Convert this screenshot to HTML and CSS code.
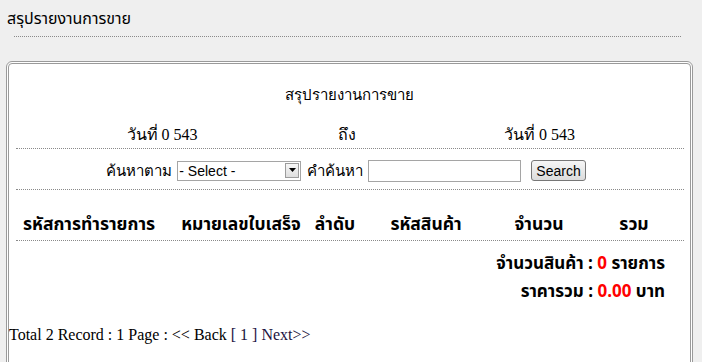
FILE: index.html
```html
<!DOCTYPE html>
<html lang="th">
<head>
  <meta charset="UTF-8">
  <title>สรุปรายงานการขาย</title>
  <link rel="stylesheet" href="styles.css">
</head>
<body>
  <div class="page-title">สรุปรายงานการขาย</div>
  <div class="title-rule"></div>

  <div class="panel">
    <div class="report-title">สรุปรายงานการขาย</div>

    <div class="date-row">
      <span>วันที่ 0 543</span>
      <span>ถึง</span>
      <span>วันที่ 0 543</span>
    </div>
    <div class="rule"></div>

    <form class="search-row" onsubmit="return false;">
      <label>ค้นหาตาม</label>
      <span class="select-wrap">
        <select class="search-select">
          <option>- Select -</option>
        </select>
        <span class="select-arrow">
          <svg width="7" height="4" viewBox="0 0 7 4"><path d="M0 0h7L3.5 4z" fill="#000"/></svg>
        </span>
      </span>
      <label>คำค้นหา</label>
      <input type="text" class="search-input">
      <button type="submit" class="search-btn">Search</button>
    </form>
    <div class="rule"></div>

    <div class="head-row">
      <div>รหัสการทำรายการ</div>
      <div>หมายเลขใบเสร็จ</div>
      <div>ลำดับ</div>
      <div>รหัสสินค้า</div>
      <div>จำนวน</div>
      <div>รวม</div>
    </div>
    <div class="rule"></div>

    <div class="summary">
      <div>จำนวนสินค้า : <span class="num">0</span> รายการ</div>
      <div>ราคารวม : <span class="num">0.00</span> บาท</div>
    </div>

    <div class="pager">
      Total 2 Record : 1 Page : &lt;&lt; Back <a href="#">[ 1 ]</a> <a href="#">Next&gt;&gt;</a>
    </div>
  </div>
</body>
</html>
```

FILE: styles.css
```css
body {
  margin: 0;
  padding: 8px 9px 0 6px;
  background: #efefef;
  font-family: "Liberation Serif", "Tahoma", serif;
  font-size: 16px;
  color: #000;
  overflow: hidden;
}

.page-title {
  font-family: "Tahoma", "Noto Sans Thai", "DejaVu Sans", sans-serif;
  font-size: 16px;
  line-height: 22px;
  padding-left: 1px;
}

.title-rule {
  border-top: 1px dotted #8a8a8a;
  margin: 6px 12px 0 8px;
}

.panel {
  margin-top: 24px;
  background: #fff;
  border: 3px double #9a9a9a;
  border-radius: 6px;
  min-height: 320px;
}

.report-title {
  text-align: center;
  font-size: 15px;
  padding-top: 21px;
  line-height: 20px;
}

.date-row {
  display: grid;
  grid-template-columns: 306px 64px 1fr;
  text-align: center;
  margin-top: 20px;
  line-height: 20px;
}

.date-row span:last-child {
  padding-left: 10px;
}

.rule {
  border-top: 1px dotted #8a8a8a;
  margin: 0 6px 0 7px;
}

.date-row + .rule {
  margin-top: 3px;
}

.search-row {
  display: flex;
  justify-content: center;
  align-items: center;
  gap: 5px;
  height: 40px;
  box-sizing: border-box;
  padding: 3px 7px 0 0;
  margin: 0;
}

.search-row label {
  font-size: 15px;
}

.select-wrap {
  position: relative;
  display: inline-block;
  margin-right: 1px;
}

.search-select {
  display: block;
  width: 124px;
  height: 20px;
  font-family: "Liberation Sans", Arial, sans-serif;
  font-size: 14px;
  border: 1px solid #a5a5a5;
  background: #fff;
  padding: 0 1px;
  appearance: none;
  -webkit-appearance: none;
  border-radius: 0;
}

.select-arrow {
  position: absolute;
  top: 2px;
  right: 2px;
  width: 14px;
  height: 15px;
  box-sizing: border-box;
  border: 1px solid #9c9c9c;
  background: linear-gradient(#f7f7f7, #dedede);
  display: flex;
  align-items: center;
  justify-content: center;
  pointer-events: none;
}

.search-input {
  width: 153px;
  height: 22px;
  box-sizing: border-box;
  border: 1px solid #a5a5a5;
  margin-right: 5px;
}

.search-btn {
  font-family: "Liberation Sans", Arial, sans-serif;
  font-size: 14px;
  height: 21px;
  padding: 0 4px;
  border: 1px solid #777;
  border-radius: 3px;
  background: linear-gradient(#f6f6f6, #dcdcdc);
}

.head-row {
  display: grid;
  grid-template-columns: 160px 144px 44px 138px 88px 102px;
  text-align: center;
  white-space: nowrap;
  font-family: "Tahoma", "Noto Sans Thai", "DejaVu Sans", sans-serif;
  font-weight: bold;
  font-size: 17.5px;
  line-height: 20px;
  padding: 25px 0 5px;
}

.summary {
  font-family: "Tahoma", "Noto Sans Thai", "DejaVu Sans", sans-serif;
  font-weight: bold;
  font-size: 17px;
  line-height: 28px;
  text-align: right;
  padding: 9px 25px 0 0;
}

.num {
  color: #f00;
}

.pager {
  margin-top: 19px;
  line-height: 20px;
}

.pager a {
  color: #1b1240;
  text-decoration: none;
}
```
